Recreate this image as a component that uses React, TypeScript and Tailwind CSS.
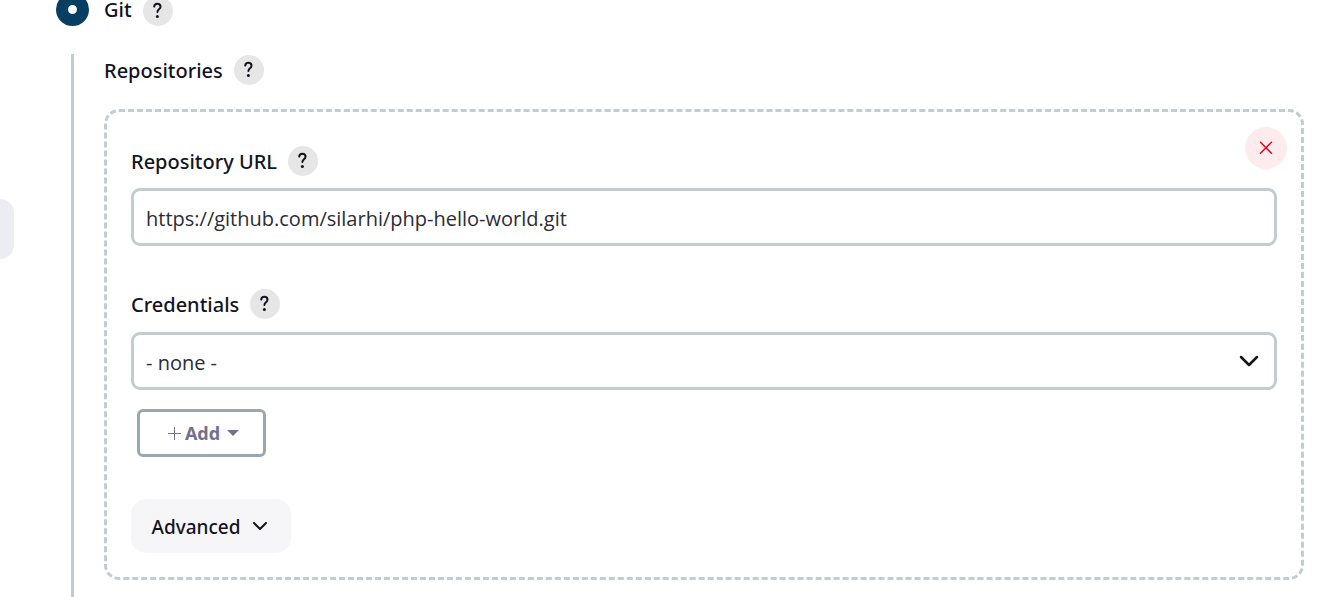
import { useState } from "react";
import type { ReactNode } from "react";

function HelpButton({ subject }: { subject: string }) {
  return (
    <button
      type="button"
      aria-label={`Help for ${subject}`}
      className="flex size-[30px] shrink-0 items-center justify-center rounded-full bg-[#e6e6e6]"
    >
      <svg viewBox="0 0 30 30" className="size-[30px]" fill="none" aria-hidden="true">
        <path
          d="M11.2 10.6c.2-1.9 1.5-2.8 3.1-2.8 1.9 0 3.2 1.1 3.2 2.9 0 2.7-3.1 2.6-3.1 5.4"
          stroke="#14141f"
          strokeWidth="2"
          strokeLinecap="round"
        />
        <circle cx="14.4" cy="20.4" r="1.5" fill="#14141f" />
      </svg>
    </button>
  );
}

function FieldLabel({ htmlFor, children, subject }: { htmlFor: string; children: ReactNode; subject: string }) {
  return (
    <div className="flex h-[30px] items-center gap-[11px]">
      <label htmlFor={htmlFor} className="pt-px">
        {children}
      </label>
      <HelpButton subject={subject} />
    </div>
  );
}

export default function App() {
  const [url, setUrl] = useState("https://github.com/silarhi/php-hello-world.git");

  return (
    <div className="flex overflow-hidden bg-white font-['Noto_Sans',sans-serif] text-[20px] leading-[30px] font-medium text-[#14141f]">
      <aside className="mt-[199px] h-[60px] w-[14px] shrink-0 rounded-r-[16px] bg-[#ecedf3]" />
      <main className="-mt-[7px] min-w-0 flex-1 pr-[39px] pl-[42px]">
        <div className="flex h-[33px] items-end">
          <input
            id="scm-git"
            type="radio"
            name="scm"
            defaultChecked
            className="size-[33px] shrink-0 appearance-none rounded-full border-[12px] border-[#073f63] bg-white"
          />
          <label htmlFor="scm-git" className="mr-[11px] mb-[7px] ml-[15px] leading-[18px]">
            Git
          </label>
          <HelpButton subject="Git" />
        </div>

        <section className="mt-7 ml-[15px] border-l-[3px] border-[#c3ccd1] pt-px pb-[17px] pl-[30px]">
          <div className="flex h-[30px] items-center gap-[11px]">
            <h2 className="pt-px">Repositories</h2>
            <HelpButton subject="Repositories" />
          </div>

          <div className="relative mt-6 rounded-[15px] border-[3px] border-dashed border-[#c3ccd1] px-6 pt-[34px] pb-6">
            <button
              type="button"
              aria-label="Delete repository"
              className="absolute top-[15px] right-[14px] flex size-[42px] items-center justify-center rounded-full bg-[#fdebed]"
            >
              <svg viewBox="0 0 14 14" className="size-[14px]" fill="none" aria-hidden="true">
                <path d="M1.5 1.2l11 11M12.5 1.2l-11 11" stroke="#e6001f" strokeWidth="1.5" strokeLinecap="round" />
              </svg>
            </button>

            <FieldLabel htmlFor="repository-url" subject="Repository URL">
              Repository URL
            </FieldLabel>
            <input
              id="repository-url"
              type="text"
              value={url}
              onChange={(event) => setUrl(event.target.value)}
              className="mt-3 block h-[58px] w-full rounded-[9px] border-[3px] border-[#c3ccd1] bg-white px-3 pt-[2px] font-['Open_Sans',sans-serif] font-normal text-[#2c2c36]"
            />

            <div className="mt-[43px]">
              <FieldLabel htmlFor="credentials" subject="Credentials">
                Credentials
              </FieldLabel>
            </div>
            <div className="relative mt-[13px]">
              <select
                id="credentials"
                className="block h-[58px] w-full appearance-none rounded-[9px] border-[3px] border-[#c3ccd1] bg-white px-3 pt-[3px] font-['Open_Sans',sans-serif] font-normal text-[#2c2c36]"
              >
                <option>- none -</option>
              </select>
              <svg
                viewBox="0 0 20 12"
                className="pointer-events-none absolute top-[23px] right-[18px] h-3 w-5"
                fill="none"
                aria-hidden="true"
              >
                <path
                  d="M2 2l8 8 8-8"
                  stroke="#14141f"
                  strokeWidth="2.5"
                  strokeLinecap="round"
                  strokeLinejoin="round"
                />
              </svg>
            </div>

            <button
              type="button"
              className="mt-[19px] ml-[6px] flex h-12 w-[129px] items-center justify-center rounded-[6px] border-[3px] border-[#9aa7af] pl-[3px] text-[18px] font-bold text-[#73708c]"
            >
              <svg viewBox="0 0 14 14" className="mr-1 size-[14px]" fill="none" aria-hidden="true">
                <path d="M7.5 1v13M1 7.5h13" stroke="#73708c" />
              </svg>
              Add
              <svg viewBox="0 0 12 6" className="ml-[7px] h-[6px] w-3" aria-hidden="true">
                <path d="M0 0h12L6 6z" fill="#73708c" />
              </svg>
            </button>

            <button
              type="button"
              className="mt-[42px] flex h-[54px] w-40 items-center justify-center gap-[11px] rounded-[15px] bg-[#f6f6f9] pt-[2px] pr-[3px] text-[19px]"
            >
              Advanced
              <svg viewBox="0 0 16 10" className="h-[10px] w-4" fill="none" aria-hidden="true">
                <path
                  d="M2 1l6 6 6-6"
                  stroke="#14141f"
                  strokeWidth="2"
                  strokeLinecap="round"
                  strokeLinejoin="round"
                />
              </svg>
            </button>
          </div>
        </section>
      </main>
    </div>
  );
}
